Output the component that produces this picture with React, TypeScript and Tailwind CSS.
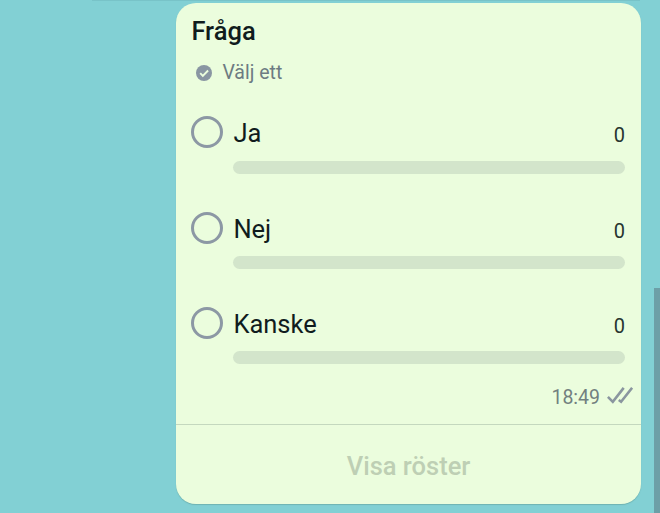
const options = [
  { label: "Ja", votes: 0 },
  { label: "Nej", votes: 0 },
  { label: "Kanske", votes: 0 },
];

function PollOption({ label, votes }: { label: string; votes: number }) {
  return (
    <div className="flex h-[95.2px] gap-[10px]">
      <button className="size-8 shrink-0 rounded-full border-3 border-[#8c98a4]" />
      <div className="flex-1">
        <div className="flex h-8 items-center justify-between">
          <span className="pt-[2px] text-[25.5px] leading-8 text-[#101c1d]">
            {label}
          </span>
          <span className="pt-[6px] text-[20px] leading-6 text-[#27352f]">
            {votes}
          </span>
        </div>
        <div className="mt-[12.5px] h-[13px] rounded-full bg-[#d3e5cb]" />
      </div>
    </div>
  );
}

export default function App() {
  return (
    <div className="h-[513px] w-[660px] overflow-hidden bg-[#82d0d4] font-[Roboto,sans-serif]">
      {/* Lower edge of the previous message */}
      <div className="ml-[92px] h-px w-[548px] bg-[#78c3c8]" />
      <div className="flex h-[512px] justify-between pl-[176px]">
        {/* Message bubble */}
        <div className="mt-[2px] flex h-[501px] w-[465px] flex-col rounded-[20px] bg-[#ebfddd] shadow-[0_1px_1px_#6fb3b2]">
          <div className="h-[422px] border-b border-[#c4d8be] pr-4 pl-[15.4px]">
            <h1 className="pt-3 text-[25.5px] leading-8 font-medium text-[#101c1d]">
              Fråga
            </h1>
            <div className="mt-[14px] flex h-6 items-center gap-[10px] pl-[5px] text-[19.5px] text-[#6d7b82]">
              <svg className="size-4" viewBox="0 0 16 16" fill="none">
                <circle cx="8" cy="8" r="8" fill="#8996a2" />
                <path
                  d="m4.2 8.2 2.6 2.6 5.3-5.3"
                  stroke="#ebfddd"
                  strokeWidth="1.9"
                />
              </svg>
              <span>Välj ett</span>
            </div>
            <div className="mt-[31.4px]">
              {options.map((option) => (
                <PollOption key={option.label} {...option} />
              ))}
            </div>
            {/* Time and delivery ticks */}
            <div className="-mt-[16.5px] -mr-2 flex h-6 items-center justify-end gap-[7px] text-[19.5px] text-[#72807f]">
              <span>18:49</span>
              <svg
                className="-mt-[3px] h-[17px] w-[26px]"
                viewBox="0 0 26 17"
                fill="none"
                stroke="#8a969f"
                strokeWidth="2.6"
              >
                <path d="m.9 9.9 4.9 4.9L16.7.9" />
                <path d="m11.8 13 2.3 1.8L25.1.9" />
              </svg>
            </div>
          </div>
          <button className="flex-1 pt-1 text-[25.5px] font-medium text-[#becfb4]">
            Visa röster
          </button>
        </div>
        {/* Scrollbar */}
        <div className="mt-[287px] w-[6px] bg-[#6d9fa7]" />
      </div>
    </div>
  );
}
